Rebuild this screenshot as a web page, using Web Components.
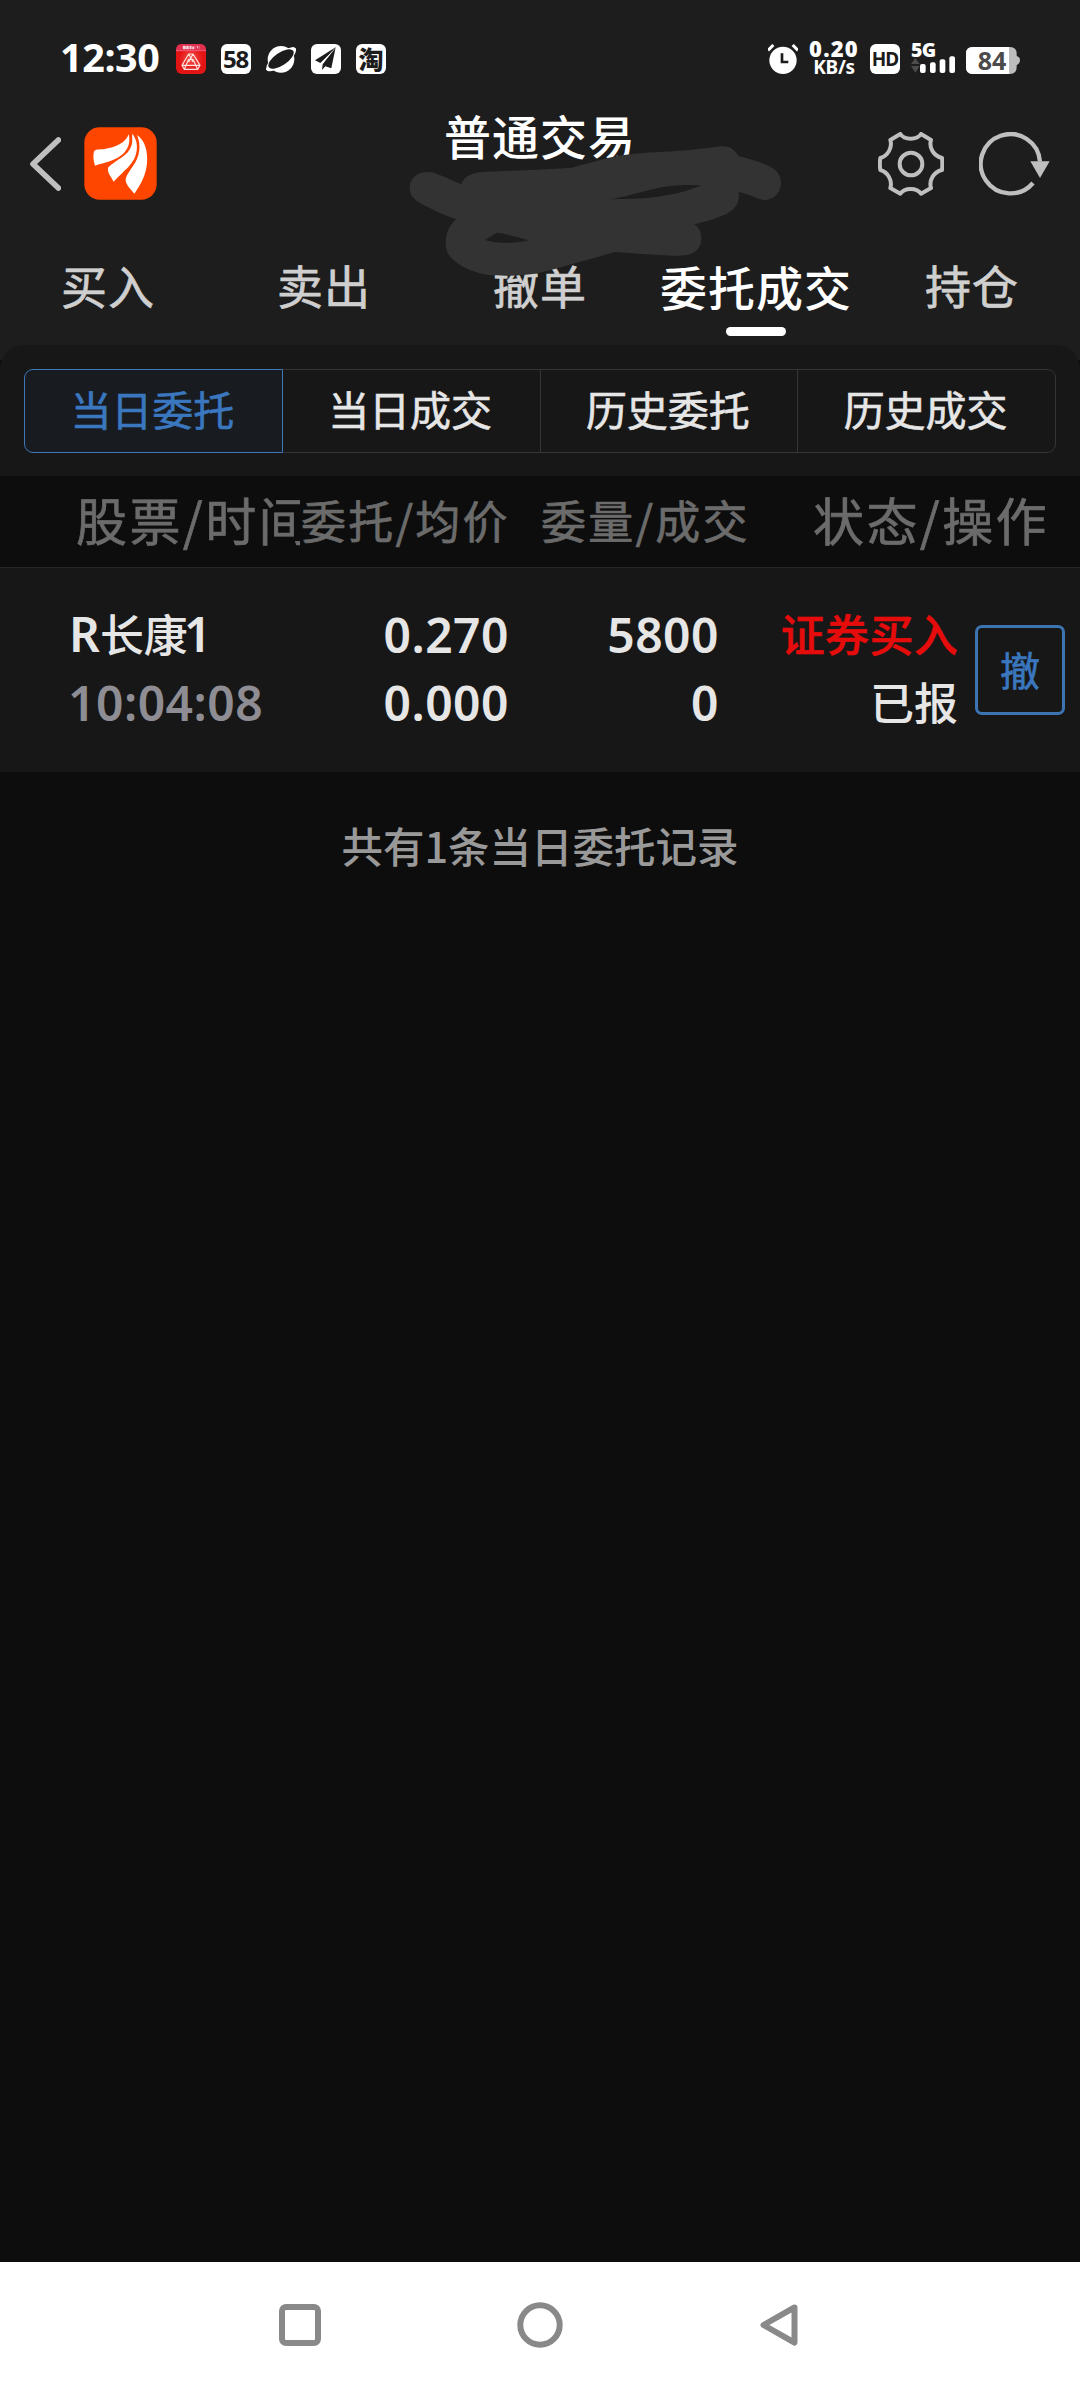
<!DOCTYPE html>
<html lang="zh-CN">
<head>
<meta charset="utf-8">
<title>普通交易</title>
<style>
html,body{margin:0;padding:0;background:#0d0d0d}
body{font-family:"Noto Sans","Noto Sans CJK SC",sans-serif;color:#e6e6e6}
</style>
</head>
<body>
<trade-app></trade-app>
<script>
const define = (name, html) => {
  const t = document.createElement('template');
  t.innerHTML = html;
  customElements.define(name, class extends HTMLElement {
    constructor() {
      super();
      this.attachShadow({ mode: 'open' }).appendChild(t.content.cloneNode(true));
    }
  });
};

define('status-bar', `
<style>
:host{display:flex;height:118px;box-sizing:border-box;padding:0 60px 0 60px;align-items:center;color:#fff;font-weight:700}
svg{display:block;flex:none}
.time{font-size:39.5px;line-height:56px;width:116px;font-weight:700;letter-spacing:-.4px;white-space:nowrap;margin-top:-5px}
.apps{display:flex;gap:15px;flex:1}
.app{width:30px;height:30px;border-radius:6px;background:#fff;color:#1c1c1c;text-align:center;line-height:30px;white-space:nowrap}
.n58{font-size:24px;letter-spacing:-1.2px;text-indent:-1px;font-weight:700}
.tao{font:900 25px/28px "Noto Sans CJK SC",sans-serif}
.speed{display:flex;flex-direction:column;width:54px;margin-left:9px;text-align:center;white-space:nowrap;margin-top:-2px}
.speed b{font-size:22px;line-height:19px;letter-spacing:1.2px}
.speed i{font-style:normal;font-size:19px;line-height:19px;letter-spacing:-.3px}
.hd{margin-left:9px;width:30px;height:30px;border-radius:6px;background:#fff;color:#1c1c1c;font:700 19px/31px "Noto Sans",sans-serif;letter-spacing:-1px;text-align:center}
.net{margin-left:11px;width:45px;height:36px;display:flex;flex-direction:column;margin-top:-6px}
.net b{font-size:19.5px;line-height:23px;height:18px;letter-spacing:-.8px}
.bat{margin-left:10px;width:54px;height:27px;display:grid;margin-top:3px}
.bat>*{grid-area:1/1}
.bat b{width:52px;text-align:center;color:#4a4a4a;font-size:25px;font-weight:700;line-height:26px}
</style>
<div class="time">12:30</div>
<div class="apps">
  <svg width="30" height="30" viewBox="0 0 90 90"><defs><radialGradient id="r"><stop offset="0" stop-color="#f5504a"/><stop offset=".8" stop-color="#e31514"/></radialGradient></defs><rect width="90" height="90" rx="18" fill="url(#r)"/><path d="M0 20V18Q0 0 18 0H72Q90 0 90 18V20Z" fill="#df3050"/><path d="M0 20H90" stroke="#f79" stroke-width="2"/><path d="M21 6h8v9h-8zM31 6h7v9h-7zM41 6h5v9h-5zM49 8h5v7h-5zM57 6v9M62 7h4v7M70 6v9" fill="#fff" stroke="#fff" stroke-width="1" opacity=".8"/><path d="M38 30H51L72 64L65 76H25L18 64ZM38 30L51 54M51 30L38 54M18 64H72M38 46L25 76M51 46L65 76M38 46H51" fill="none" stroke="#ffe3dc" stroke-width="3.5"/></svg>
  <div class="app n58">58</div>
  <svg width="30" height="30" viewBox="0 0 90 90"><circle cx="45" cy="46" r="40" fill="#fff"/><path d="M2 78C-4 60 20 36 48 20C66 10 88 8 90 15C92 30 72 54 46 69C28 80 6 86 2 78Z" fill="#fff"/><ellipse cx="45" cy="45" rx="44" ry="19" transform="rotate(-34 45 45)" fill="#1c1c1c"/><path d="M1 72Q4 80 16 76M74 14Q87 10 88 20" fill="none" stroke="#fff" stroke-width="6"/></svg>
  <svg width="30" height="30" viewBox="0 0 90 90"><rect width="90" height="90" rx="18" fill="#fff"/><path d="M74 10L12 49L28 57L68 18L35 61L33 78L43 67L61 73Z" fill="#1c1c1c"/><path d="M72 13L31 60" stroke="#fff" stroke-width="2"/></svg>
  <div class="app tao">淘</div>
</div>
<svg width="30" height="30" viewBox="0 0 90 90"><circle cx="45" cy="49" r="41" fill="#fff"/><path d="M0 19L16 3M74 3L90 19" stroke="#fff" stroke-width="9"/><path d="M42 28V54H61" stroke="#1c1c1c" stroke-width="8" fill="none"/></svg>
<div class="speed"><b>0.20</b><i>KB/s</i></div>
<div class="hd">HD</div>
<div class="net"><b>5G</b>
<svg width="45" height="18" viewBox="0 0 135 54"><path d="M0 24L13 6L26 24ZM0 30H26L13 50Z" fill="#4c4c4c"/><g fill="#fff"><rect x="27" y="24" width="17" height="27" rx="6"/><rect x="57" y="19" width="17" height="32" rx="6"/><rect x="86" y="10" width="17" height="41" rx="6"/><rect x="115" y="1" width="17" height="50" rx="6"/></g></svg></div>
<div class="bat"><svg width="54" height="27" viewBox="0 0 162 81"><path d="M20 0H132Q152 0 152 20V27Q162 30 162 40Q162 50 152 54V61Q152 81 132 81H20Q0 81 0 61V20Q0 0 20 0Z" fill="#bdbdbd"/><path d="M20 0H129V81H20Q0 81 0 61V20Q0 0 20 0Z" fill="#fff"/></svg><b>84</b></div>
`);

define('nav-header', `
<style>
:host{display:flex;height:122px;align-items:flex-start;padding:9px 30px 0 30px;box-sizing:border-box}
svg{display:block;flex:none}
.side{display:flex;gap:23px;flex:1 1 0;height:73px;align-items:center}
.right{justify-content:flex-end;gap:35px}
h1{margin:-24px 0 0;font:500 47px/64px "Noto Sans CJK SC",sans-serif;letter-spacing:1px;color:#fff;white-space:nowrap}
</style>
<div class="side">
<svg width="31" height="54" viewBox="0 0 93 162"><path d="M85 9L9 81L85 153" fill="none" stroke="#bfbfbf" stroke-width="17" stroke-linecap="round" stroke-linejoin="round"/></svg>
<svg width="73" height="73" viewBox="252 81 219 219"><rect x="253" y="82" width="217" height="217" rx="46" fill="#ff4600"/><g fill="#fff"><path d="M281 160C283 147 290 149 310 148C350 142 377 128 386 103C392 125 385 150 365 165C340 185 310 188 285 197C281 185 279 172 281 160Z"/><path d="M397 101C408 115 413 132 410 152C405 192 370 212 341 245C334 232 319 215 325 202C345 180 385 170 395 135C399 122 395 110 397 101Z"/><path d="M411 105C435 120 444 155 441 190C438 225 422 255 403 281C393 268 375 252 377 236C385 210 414 190 418 150C420 130 415 115 411 105Z"/></g></svg>
</div>
<h1>普通交易</h1>
<div class="side right">
<svg width="66" height="64" viewBox="233 93 198 192"><g fill="none" stroke="#bfbfbf" stroke-width="12"><path d="M300 99C312 118 350 118 362 99L392 117C385 140 400 165 425 171Q427 189 425 207C400 213 385 238 392 261L362 278C350 259 312 259 300 278L270 261C277 238 262 213 240 207Q237 189 240 171C262 165 277 140 270 117Z" stroke-linejoin="round"/><circle cx="332" cy="189" r="34"/></g></svg>
<svg width="71" height="64" viewBox="538 93 213 192"><path d="M721 182A89 89 0 1 0 700 246" fill="none" stroke="#bfbfbf" stroke-width="13"/><path d="M692 181H750L721 231Z" fill="#bfbfbf"/></svg>
</div>
`);

define('trade-tab', `
<style>
:host{display:flex;flex-direction:column;align-items:center;flex:1 1 0;min-width:0;height:105px;color:#cfcfcf;font:400 46px/62px "Noto Sans CJK SC",sans-serif;letter-spacing:1px;white-space:nowrap;padding-top:13px;box-sizing:border-box;-webkit-text-stroke:.7px currentColor}
i{display:none;width:60px;height:9px;border-radius:5px;background:#fff;margin-top:10px}
:host([active]){color:#fff;font-weight:500;font-size:47px;padding-top:15px;-webkit-text-stroke:0}
:host([active]) i{display:block}
</style><span><slot></slot></span><i></i>`);

define('segment-item', `
<style>
:host{display:block;flex:1 1 0;box-sizing:border-box;height:84px;border:1px solid #353535;border-left-width:0;text-align:center;font:400 41px/77px "Noto Sans CJK SC",sans-serif;color:#e6e6e6;white-space:nowrap;padding-right:2px;-webkit-text-stroke:.6px currentColor}
:host(:last-child){border-radius:0 9px 9px 0}
:host([active]){border:1px solid #3f78b8;border-radius:9px 0 0 9px;background:#181b20;color:#3a77bf}
</style><slot></slot>`);

define('list-header', `
<style>
:host{display:flex;height:92px;box-sizing:border-box;border-bottom:1px solid #262626;background:#0d0d0d;color:#6b6b6b;font:400 45px/88px "Noto Sans CJK SC",sans-serif;white-space:nowrap;letter-spacing:2.2px;-webkit-text-stroke:.7px currentColor}
span{overflow:hidden;flex:none;box-sizing:border-box}
.a{width:300px;padding-left:76px;font-size:51px;line-height:87px;letter-spacing:2.4px}
.b{width:240px;padding-left:1px}.c{width:273px;padding-left:1px}.d{flex:1;font-size:51px;line-height:87px;letter-spacing:2.4px}
</style>
<span class="a">股票/时间</span><span class="b">委托/均价</span><span class="c">委量/成交</span><span class="d">状态/操作</span>`);

define('order-cell', `
<style>
:host{display:flex;flex-direction:column;flex:none;box-sizing:border-box;white-space:nowrap;font:500 44px/68px "Noto Sans CJK SC",sans-serif;color:#e6e6e6}
:host([right]){align-items:flex-end}
::slotted(*){display:block;height:68px}
</style><slot></slot>`);

define('order-row', `
<style>
:host{display:flex;height:204px;box-sizing:border-box;padding:31px 15px 0 70px;background:#171717}
.n{font:600 48px/72px "Noto Sans",sans-serif;letter-spacing:.5px}
.t{color:#8e8d93;margin-left:-2px;letter-spacing:.5px}
.red{color:#e60c0c;-webkit-text-stroke:.5px currentColor;letter-spacing:.3px}
button{margin:26px 0 0 17px;width:90px;height:90px;box-sizing:border-box;border:3px solid #3d74b4;border-radius:7px;background:none;padding:0 0 3px;color:#3a77bf;font:400 40px/80px "Noto Sans CJK SC",sans-serif;flex:none;-webkit-text-stroke:.6px currentColor}
.r{font:600 48px/60px "Noto Sans",sans-serif}
.name{margin-left:-1px}
.r+.r{margin-left:-4px}
</style>
<order-cell style="width:220px"><span class="name"><span class="r">R</span>长康<span class="r">1</span></span><span class="n t">10:04:08</span></order-cell>
<order-cell right style="width:219px"><span class="n">0.270</span><span class="n">0.000</span></order-cell>
<order-cell right style="width:210px"><span class="n">5800</span><span class="n">0</span></order-cell>
<order-cell right style="width:239px"><span class="red">证券买入</span><span>已报</span></order-cell>
<button>撤</button>`);

define('system-nav', `
<style>
:host{display:flex;height:126px;background:#fff;justify-content:space-between;align-items:center;padding:0 279px;box-sizing:border-box}
svg{display:block}
</style>
<svg width="42" height="42"><rect x="3" y="3" width="36" height="36" rx="4" fill="none" stroke="#898989" stroke-width="6"/></svg>
<svg width="46" height="46"><circle cx="23" cy="23" r="19.7" fill="none" stroke="#898989" stroke-width="6"/></svg>
<svg width="42" height="42" viewBox="0 0 42 42"><path d="M35.5 3.4L4.5 21L35.5 38.6Z" fill="none" stroke="#898989" stroke-width="6" stroke-linejoin="round"/></svg>`);

define('privacy-scribble', `
<style>:host{position:absolute;left:390px;top:100px;display:block}svg{display:block}</style>
<svg width="420" height="200" viewBox="0 0 1260 600"><path fill="#333" fill-rule="evenodd" d="M108 216C135 214 170 235 213 252C225 225 250 216 290 215C380 212 470 208 545 203C600 190 670 165 730 162C790 155 850 155 900 150L995 139C1020 138 1036 150 1046 169C1080 176 1120 190 1140 200C1165 212 1173 230 1173 250C1172 282 1148 301 1122 300C1102 298 1090 286 1046 276C1050 305 1040 325 1010 342C980 355 945 366 913 373C928 383 934 398 934 415C934 448 912 464 885 466C850 471 740 460 675 456C620 472 580 483 555 490C520 500 480 512 442 520C400 528 340 528 300 526C230 515 190 485 175 462C160 435 165 385 199 358C160 345 120 325 95 312C70 298 59 285 59 262C60 235 82 217 108 216ZM655 299C700 292 720 285 740 280C800 262 850 254 890 255L935 256C915 264 900 268 887 273C850 283 800 292 760 295C720 298 690 296 655 299ZM286 420L320 398C350 402 390 414 417 421C380 430 320 432 286 420Z"/></svg>`);

define('trade-app', `
<style>
:host{display:flex;flex-direction:column;width:1080px;height:2388px;position:relative;background:#0d0d0d;overflow:hidden}
.top{background:#1d1d1d;height:360px;flex:none}
.tabs{display:flex}
.panel{background:#171717;border-radius:24px 24px 0 0;margin-top:-15px;padding:24px 24px 23px;display:flex;flex:none}
.summary{flex:1;text-align:center;color:#999;font:500 41.5px/60px "Noto Sans CJK SC",sans-serif;padding-top:43px}
</style>
<div class="top">
<status-bar></status-bar>
<nav-header></nav-header>
<div class="tabs"><trade-tab>买入</trade-tab><trade-tab>卖出</trade-tab><trade-tab>撤单</trade-tab><trade-tab active>委托成交</trade-tab><trade-tab>持仓</trade-tab></div>
</div>
<div class="panel"><segment-item active>当日委托</segment-item><segment-item>当日成交</segment-item><segment-item>历史委托</segment-item><segment-item>历史成交</segment-item></div>
<list-header></list-header>
<order-row></order-row>
<div class="summary">共有1条当日委托记录</div>
<system-nav></system-nav>
<privacy-scribble></privacy-scribble>
`);
</script>
</body>
</html>
